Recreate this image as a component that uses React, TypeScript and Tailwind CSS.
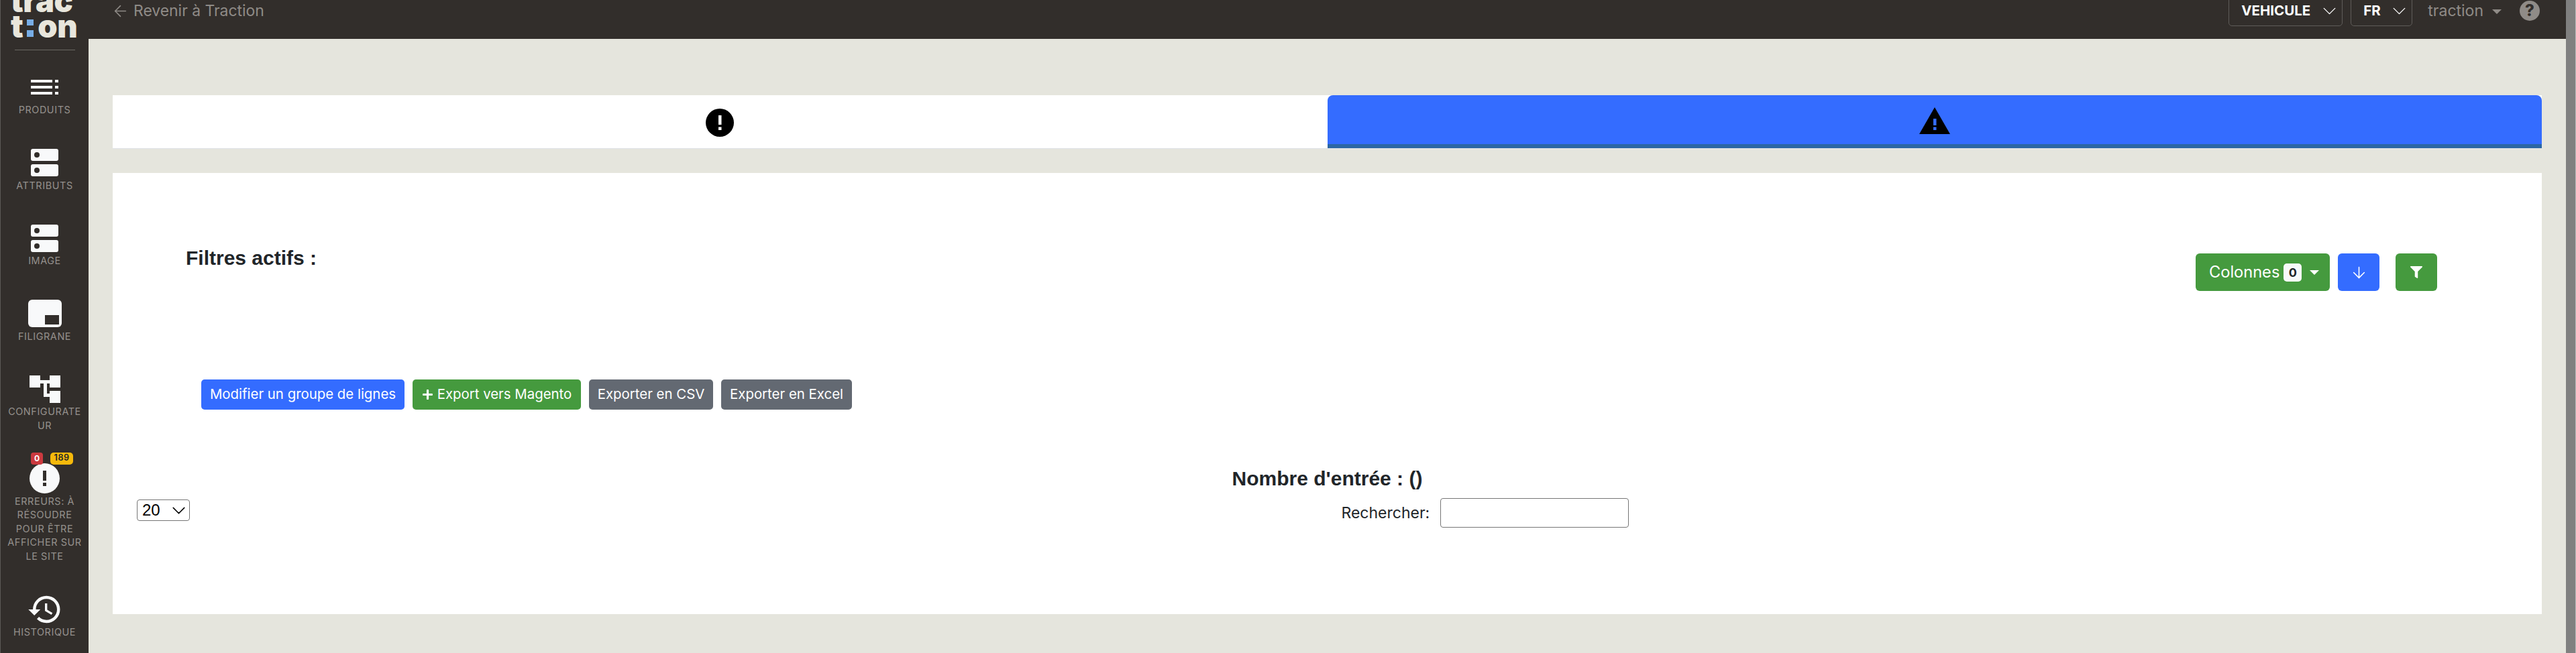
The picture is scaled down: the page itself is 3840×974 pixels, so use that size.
import { ArrowDown, ArrowLeft, ChevronDown } from 'lucide-react';
import type { ReactNode } from 'react';
import { FaFilter, FaPlus } from 'react-icons/fa';
import { MdHistory } from 'react-icons/md';

const NavItem = ({ icon, label }: { icon: ReactNode; label: string }) => (
  <div className="mb-[47px] flex w-full flex-col items-center">
    <div className="relative flex h-[42px] items-center justify-center">{icon}</div>
    <p className="mt-[3px] w-[116px] text-center text-[14.4px] leading-[20.6px] tracking-[0.6px] [overflow-wrap:anywhere] text-[#95918d] uppercase">
      {label}
    </p>
  </div>
);

const ProductsIcon = () => (
  <svg width="41" height="22" viewBox="0 0 41 22" fill="#f8f9fa">
    <rect x="0" y="0" width="32" height="4" />
    <rect x="0" y="9" width="32" height="4" />
    <rect x="0" y="18" width="32" height="4" />
    <rect x="36" y="0" width="5" height="4" />
    <rect x="36" y="9" width="5" height="4" />
    <rect x="36" y="18" width="5" height="4" />
  </svg>
);

const ServerIcon = () => (
  <svg width="41" height="41" viewBox="0 0 41 41">
    <rect x="0" y="0" width="41" height="18" rx="3" fill="#f8f9fa" />
    <rect x="0" y="23" width="41" height="18" rx="3" fill="#f8f9fa" />
    <circle cx="9" cy="9" r="4" fill="#322e2b" />
    <circle cx="9" cy="32" r="4" fill="#322e2b" />
  </svg>
);

const WatermarkIcon = () => (
  <svg width="50" height="41" viewBox="0 0 50 41">
    <rect x="0" y="0" width="50" height="41" rx="6" fill="#f8f9fa" />
    <rect x="25" y="23" width="21" height="14" fill="#322e2b" />
  </svg>
);

const ConfigIcon = () => (
  <svg width="46" height="41" viewBox="0 0 46 41" fill="#f8f9fa">
    <rect x="0" y="0" width="16" height="18" />
    <rect x="30" y="0" width="16" height="18" />
    <rect x="30" y="23" width="16" height="18" />
    <rect x="16" y="7" width="14" height="5" />
    <rect x="21" y="7" width="5" height="25" />
    <rect x="21" y="27" width="9" height="5" />
  </svg>
);

const ErrorsIcon = () => (
  <>
    <span className="absolute top-[-18px] left-[2px] z-10 flex h-[18px] w-[18px] items-center justify-center rounded-[4px] bg-[#cb3a3f] text-[12px] font-bold text-white">
      0
    </span>
    <span className="absolute top-[-18px] left-[31px] z-10 flex h-[18px] w-[34px] items-center justify-center rounded-[5px] bg-[#f6b90b] text-[12.5px] font-semibold tracking-[0.5px] text-[#212529]">
      189
    </span>
    <svg width="45" height="45" viewBox="0 0 45 45">
      <circle cx="22.5" cy="22.5" r="22.5" fill="#f8f9fa" />
      <rect x="20" y="11" width="5" height="15" fill="#322e2b" />
      <rect x="20" y="29" width="5" height="5" fill="#322e2b" />
    </svg>
  </>
);

const Sidebar = () => (
  <aside className="flex h-full w-[132px] shrink-0 flex-col items-center overflow-hidden border-l border-[#5c5a57] bg-[#322e2b]">
    <div className="mt-[-18px] w-full pl-[15px] text-[47px] leading-[38px] font-black tracking-[-0.5px] text-[#e8e6dc]">
      <div>trac</div>
      <div className="flex items-center">
        <span>t</span>
        <span className="mx-[6px] mt-[6px] flex flex-col gap-[7px]">
          <span className="block h-[9px] w-[10px] bg-[#77ade6]" />
          <span className="block h-[10px] w-[10px] bg-[#77ade6]" />
        </span>
        <span>on</span>
      </div>
    </div>
    <div className="mt-[16px] mb-[34px] h-px w-[90px] shrink-0 bg-[#6a6763]" />
    <NavItem icon={<ProductsIcon />} label="Produits" />
    <NavItem icon={<ServerIcon />} label="Attributs" />
    <NavItem icon={<ServerIcon />} label="Image" />
    <NavItem icon={<WatermarkIcon />} label="Filigrane" />
    <NavItem icon={<ConfigIcon />} label="Configurateur" />
    <NavItem icon={<ErrorsIcon />} label="Erreurs: à résoudre pour être afficher sur le site" />
    <NavItem icon={<MdHistory size={54} color="#f8f9fa" />} label="Historique" />
  </aside>
);

const TopSelect = ({ label, width }: { label: string; width: string }) => (
  <div className={`flex h-[46px] items-center justify-between rounded-[5px] border border-[#5f5c59] pr-[2px] pl-[18px] text-[20.5px] font-bold text-white ${width}`}>
    <span>{label}</span>
    <ChevronDown size={33} strokeWidth={1} color="#ffffff" />
  </div>
);

const TopBar = () => (
  <header className="flex h-[58px] shrink-0 justify-between overflow-hidden bg-[#322e2b] pr-[39px] pl-[34px]">
    <div className="flex h-[33px] items-center gap-[6px] text-[22.9px] text-[#8f8b87]">
      <ArrowLeft size={27} strokeWidth={1.4} />
      <span>Revenir à Traction</span>
    </div>
    <div className="mt-[-7px] flex h-[46px] items-center">
      <TopSelect label="VEHICULE" width="w-[170px]" />
      <div className="ml-[12px]">
        <TopSelect label="FR" width="w-[92px]" />
      </div>
      <span className="ml-[23px] text-[23px] text-[#8f8b87]">traction</span>
      <span className="mt-[2px] ml-[13px] h-0 w-0 border-x-[7px] border-t-[7px] border-x-transparent border-t-[#8f8b87]" />
      <span className="ml-[27px] flex h-[30px] w-[30px] items-center justify-center rounded-full bg-[#8f8b87] text-[24px] font-extrabold text-[#322e2b]">
        ?
      </span>
    </div>
  </header>
);

const Tabs = () => (
  <div className="grid h-[79px] grid-cols-2 bg-white shadow-[0_1px_0_#dee2e6]">
    <div className="flex items-center justify-center pt-[2px]">
      <svg width="42" height="42" viewBox="0 0 42 42">
        <circle cx="21" cy="21" r="21" fill="#000000" />
        <rect x="19" y="10" width="4.5" height="14" fill="#ffffff" />
        <rect x="19" y="27.5" width="4.5" height="4.5" fill="#ffffff" />
      </svg>
    </div>
    <div className="flex items-center justify-center rounded-t-[8px] border-b-[6px] border-[#2b66a3] bg-[#346cff] pt-[3px]">
      <svg width="46" height="40" viewBox="0 0 46 40">
        <polygon points="23,0 46,40 0,40" fill="#000000" />
        <rect x="21" y="17" width="4.5" height="10" fill="#346cff" />
        <rect x="21" y="29.5" width="4.5" height="4.5" fill="#346cff" />
      </svg>
    </div>
  </div>
);

const ActionButton = ({ className, children }: { className: string; children: ReactNode }) => (
  <button className={`flex h-[45px] items-center justify-center rounded-[5px] text-[20.4px] text-white ${className}`}>
    {children}
  </button>
);

const Card = () => (
  <section className="mt-[37px] flex h-[658px] flex-col bg-white text-[#212529]">
    <div className="flex items-start justify-between pt-[110px] pr-[156px] pl-[109px]">
      <h2 className="font-['Liberation_Sans',sans-serif] text-[30px] leading-[34px] font-bold">Filtres actifs :</h2>
      <div className="mt-[10px] flex items-center text-white">
        <button className="flex h-[56px] w-[200px] items-center rounded-[6px] bg-[#459a3e] pl-[20px] text-[23.6px]">
          <span>Colonnes</span>
          <span className="ml-[6px] flex h-[27px] w-[27px] items-center justify-center rounded-[5px] bg-[#f8f9fa] text-[18px] font-bold text-[#212529]">
            0
          </span>
          <span className="ml-[12px] h-0 w-0 border-x-[7px] border-t-[7px] border-x-transparent border-t-white" />
        </button>
        <button className="ml-[12px] flex h-[56px] w-[62px] items-center justify-center rounded-[6px] bg-[#346cff]">
          <ArrowDown size={27} strokeWidth={1.4} />
        </button>
        <button className="ml-[24px] flex h-[56px] w-[62px] items-center justify-center rounded-[6px] bg-[#459a3e]">
          <FaFilter size={18} />
        </button>
      </div>
    </div>
    <div className="mt-[132px] flex gap-[12px] pl-[132px]">
      <ActionButton className="w-[303px] bg-[#346cff]">Modifier un groupe de lignes</ActionButton>
      <ActionButton className="w-[251px] gap-[6px] bg-[#459a3e]">
        <FaPlus size={17} />
        Export vers Magento
      </ActionButton>
      <ActionButton className="w-[185px] bg-[#636972]">Exporter en CSV</ActionButton>
      <ActionButton className="w-[195px] bg-[#636972]">Exporter en Excel</ActionButton>
    </div>
    <h3 className="mt-[85px] text-center font-['Liberation_Sans',sans-serif] text-[30px] leading-[36px] font-bold">
      Nombre d'entrée : ()
    </h3>
    <div className="mt-[11px] grid grid-cols-2 items-start">
      <div className="pt-[2px] pl-[36px]">
        <div className="relative w-[79px]">
          <select className="h-[32px] w-full appearance-none rounded-[4px] border border-[#767676] bg-white pl-[7px] font-['Liberation_Sans',sans-serif] text-[24px] leading-none text-black">
            <option>20</option>
          </select>
          <ChevronDown size={33} strokeWidth={1.1} color="#000000" className="pointer-events-none absolute top-0 right-0" />
        </div>
      </div>
      <label className="flex items-center gap-[16px] pl-[21px] text-[23px]">
        Rechercher:
        <input className="h-[44px] w-[281px] rounded-[4px] border border-[#767676] bg-white" />
      </label>
    </div>
  </section>
);

export default function App() {
  return (
    <div className="flex h-[974px] w-full overflow-hidden bg-[#e5e5dd] font-['Inter',sans-serif]">
      <Sidebar />
      <div className="flex min-w-0 flex-1 flex-col">
        <TopBar />
        <main className="flex-1 px-[36px] pt-[84px]">
          <Tabs />
          <Card />
        </main>
      </div>
      <div className="w-[15px] shrink-0 border-r border-[#bdbdbd] bg-[#808080]" />
    </div>
  );
}
